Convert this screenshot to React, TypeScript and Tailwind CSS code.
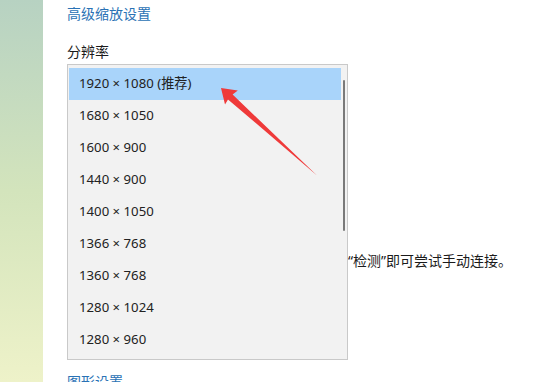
const resolutions = [
  "1920 × 1080 (推荐)",
  "1680 × 1050",
  "1600 × 900",
  "1440 × 900",
  "1400 × 1050",
  "1366 × 768",
  "1360 × 768",
  "1280 × 1024",
  "1280 × 960",
];

const font = { fontFamily: '"Noto Sans", "Noto Sans CJK SC", sans-serif' };

export default function App() {
  return (
    <div className="relative flex w-[539px] h-[382px] overflow-hidden bg-white text-[14px] text-[#1b1b1b]" style={font}>
      {/* left strip */}
      <div className="w-[43px] shrink-0 bg-gradient-to-b from-[#b7d2c2] via-[#d3e4bc] to-[#eef2c9]" />

      {/* main */}
      <div className="flex-1 pl-[24px] pt-[4px]">
        <div className="leading-[20px] text-[#2a72b5]">高级缩放设置</div>
        <div className="mt-[18px] leading-[20px]">分辨率</div>

        <div className="mt-[2px] flex items-start">
          <div className="relative w-[281px] border border-[#c9c9c9] bg-[#f2f2f2] pl-[1px] pr-[6px] py-[3px]">
            <ul className="text-[13.2px] text-[#222]">
              {resolutions.map((r, i) => (
                <li
                  key={r}
                  className={
                    i === 0
                      ? "h-[32px] flex items-center pl-[10px] bg-[#a9d4fa]"
                      : "h-[32px] flex items-center pl-[10px]"
                  }
                >
                  {r}
                </li>
              ))}
            </ul>
            {/* scrollbar */}
            <div className="absolute right-[2px] top-[15px] w-[2px] h-[151px] rounded-full bg-[#7a7a7a]" />
          </div>
          <div className="mt-[187px] leading-[20px] whitespace-nowrap">“检测”即可尝试手动连接。</div>
        </div>

        <div className="mt-[12px] leading-[20px] text-[#2a72b5]">图形设置</div>
      </div>

      {/* annotation arrow */}
      <svg className="absolute left-0 top-0 pointer-events-none" width="539" height="382">
        <polygon
          points="221,88 237.8,90.6 232.6,94.6 317,175.4 228,99.4 225,104.4"
          fill="#ef3a3a"
        />
      </svg>
    </div>
  );
}
